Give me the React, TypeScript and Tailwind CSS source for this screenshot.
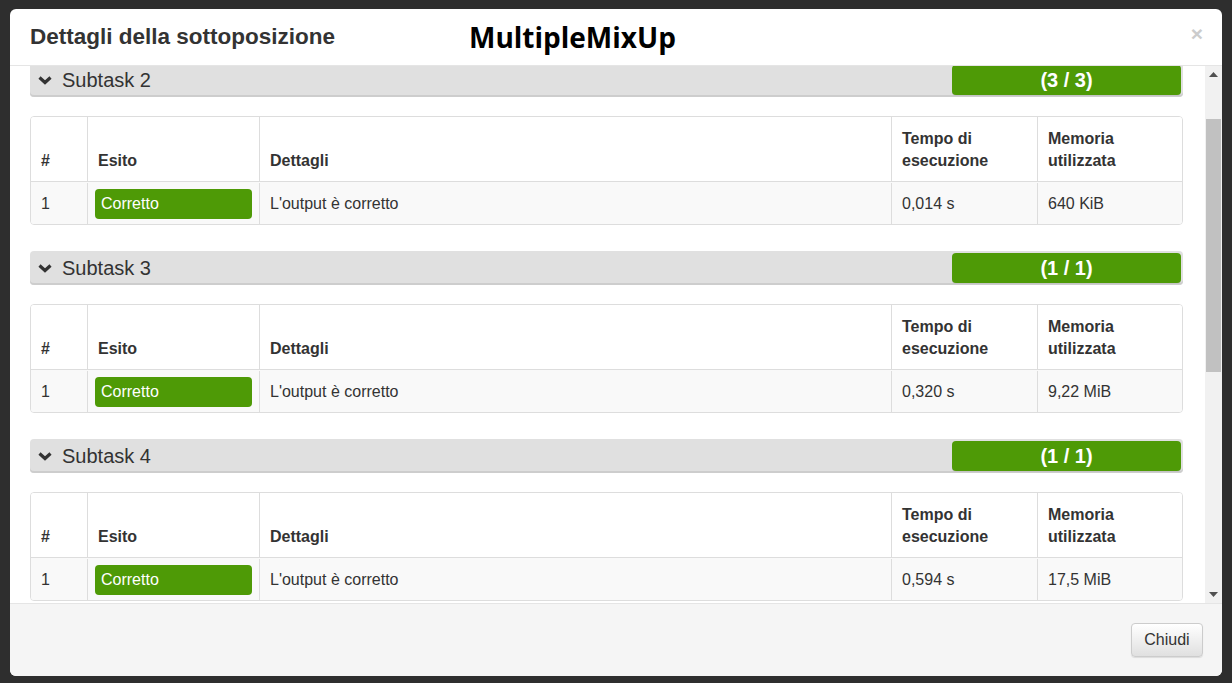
import React from "react";

const subtasks = [
  { name: "Subtask 2", score: "(3 / 3)", time: "0,014 s", mem: "640 KiB" },
  { name: "Subtask 3", score: "(1 / 1)", time: "0,320 s", mem: "9,22 MiB" },
  { name: "Subtask 4", score: "(1 / 1)", time: "0,594 s", mem: "17,5 MiB" },
];

function Chevron() {
  return (
    <svg width="14" height="10" viewBox="0 0 14 10" className="shrink-0">
      <path d="M1.5 2.5 L7 7.5 L12.5 2.5" fill="none" stroke="#333" strokeWidth="3.2" strokeLinejoin="miter" />
    </svg>
  );
}

function SubtaskBlock({ s }: { s: (typeof subtasks)[number] }) {
  return (
    <div className="flex flex-col">
      <div className="h-[34px] rounded-[4px] bg-[#e0e0e0] shadow-[inset_0_-2px_0_#cdcdcd] flex items-start pr-[2px] pt-[2px]">
        <div className="h-[30px] flex items-center pl-[8px]">
          <Chevron />
          <span className="ml-[10px] text-[20px] text-[#333] leading-none -mt-[1px]">{s.name}</span>
        </div>
        <div className="ml-auto w-[229px] h-[30px] rounded-[4px] bg-[#4e9a06] shadow-[0_1px_0_#c4c4c4] flex items-center justify-center text-white font-bold text-[20px] leading-none">
          {s.score}
        </div>
      </div>
      <div className="mt-[19px] h-[109px] rounded-[4px] border border-[#dddddd] overflow-hidden text-[16px] text-[#333]">
        <div className="h-[65px] flex border-b border-[#dddddd] bg-white font-bold leading-[22px]">
          <div className="w-[56px] flex flex-col justify-end px-[10px] pb-[9px]">#</div>
          <div className="w-[172px] border-l border-[#dddddd] flex flex-col justify-end px-[10px] pb-[9px]">Esito</div>
          <div className="w-[632px] border-l border-[#dddddd] flex flex-col justify-end px-[10px] pb-[9px]">Dettagli</div>
          <div className="w-[146px] border-l border-[#dddddd] flex flex-col justify-end px-[10px] pb-[9px]">
            <span>Tempo di</span>
            <span>esecuzione</span>
          </div>
          <div className="flex-1 border-l border-[#dddddd] flex flex-col justify-end px-[10px] pb-[9px]">
            <span>Memoria</span>
            <span>utilizzata</span>
          </div>
        </div>
        <div className="h-[42px] flex bg-[#f9f9f9] pt-[1px]">
          <div className="w-[56px] flex items-center px-[10px]">1</div>
          <div className="w-[172px] border-l border-[#dddddd] flex items-center px-[7px]">
            <div className="w-full h-[30px] rounded-[4px] bg-[#4e9a06] text-white flex items-center px-[6px]">Corretto</div>
          </div>
          <div className="w-[632px] border-l border-[#dddddd] flex items-center px-[10px]">L'output è corretto</div>
          <div className="w-[146px] border-l border-[#dddddd] flex items-center px-[10px]">{s.time}</div>
          <div className="flex-1 border-l border-[#dddddd] flex items-center px-[10px]">{s.mem}</div>
        </div>
      </div>
    </div>
  );
}

export default function App() {
  return (
    <div className="relative w-[1232px] h-[683px] bg-[#2e2e2e] overflow-hidden font-['Liberation_Sans',Arial,sans-serif]">
      <div className="absolute left-[10px] top-[9px] w-[1212px] h-[667px] bg-white rounded-[6px] flex flex-col overflow-hidden">
        <div className="h-[57px] shrink-0 border-b border-[#e5e5e5] flex items-center pl-[20px] pr-[19px]">
          <h4 className="w-[439px] text-[22.5px] font-bold text-[#333] leading-none">Dettagli della sottoposizione</h4>
          <span className="text-[28px] font-bold text-black leading-none font-['Open_Sans',sans-serif]">MultipleMixUp</span>
          <span className="ml-auto text-[21px] font-bold text-[#cccccc] leading-none -mt-[7px]">×</span>
        </div>
        <div className="h-[537px] shrink-0 flex">
          <div className="flex-1 overflow-hidden pl-[20px] pr-[22px]">
            <div className="-mt-[3px] flex flex-col gap-[26px]">
              {subtasks.map((s) => (
                <SubtaskBlock key={s.name} s={s} />
              ))}
            </div>
          </div>
          <div className="w-[17px] bg-[#f1f1f1] flex flex-col items-center">
            <div className="h-[17px] flex items-center justify-center">
              <svg width="9" height="5" viewBox="0 0 9 5">
                <path d="M0 5 L4.5 0 L9 5 Z" fill="#505050" />
              </svg>
            </div>
            <div className="mt-[36px] w-[15px] h-[253px] bg-[#c1c1c1]" />
            <div className="mt-auto h-[17px] flex items-center justify-center">
              <svg width="9" height="5" viewBox="0 0 9 5">
                <path d="M0 0 L9 0 L4.5 5 Z" fill="#505050" />
              </svg>
            </div>
          </div>
        </div>
        <div className="flex-1 border-t border-[#e5e5e5] bg-[#f5f5f5] flex items-center justify-end pr-[19px]">
          <button className="w-[72px] h-[34px] rounded-[4px] border border-[#cccccc] bg-gradient-to-b from-white to-[#e0e0e0] shadow-[0_1px_1px_rgba(0,0,0,0.1)] text-[16px] text-[#333]">
            Chiudi
          </button>
        </div>
      </div>
    </div>
  );
}
